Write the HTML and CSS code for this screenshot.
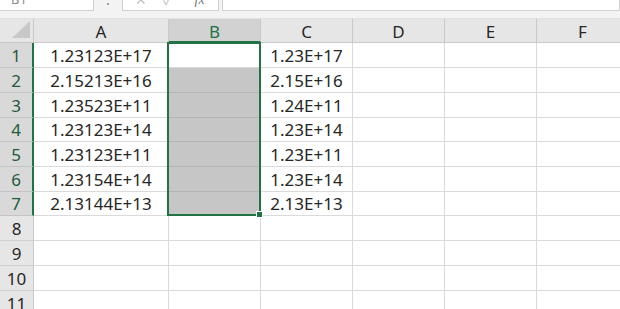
FILE: index.html
```html
<!DOCTYPE html>
<html>
<head>
<meta charset="utf-8">
<link rel="stylesheet" href="styles.css">
</head>
<body>
<div class="app">
  <div class="topbar">
    <div class="namebox"><span class="cut">B1</span></div>
    <div class="sep"><span class="dots">⋮</span></div>
    <div class="btnbox">
      <span class="cut icon">✕</span>
      <span class="cut icon">✓</span>
      <span class="cut icon fx">fx</span>
    </div>
    <div class="formula"></div>
  </div>
  <div class="sheet">
    <div class="grid">
      <div class="corner"><svg width="19" height="18" viewBox="0 0 19 18"><polygon points="18,0 18,17 0,17" fill="#c8c8c8"/></svg></div>
      <div class="ch">A</div>
      <div class="ch sel">B</div>
      <div class="ch">C</div>
      <div class="ch">D</div>
      <div class="ch">E</div>
      <div class="ch">F</div>

      <div class="rh on">1</div><div class="c">1.23123E+17</div><div class="c b"></div><div class="c">1.23E+17</div><div class="c"></div><div class="c"></div><div class="c"></div>
      <div class="rh on">2</div><div class="c">2.15213E+16</div><div class="c b g"></div><div class="c">2.15E+16</div><div class="c"></div><div class="c"></div><div class="c"></div>
      <div class="rh on">3</div><div class="c">1.23523E+11</div><div class="c b g"></div><div class="c">1.24E+11</div><div class="c"></div><div class="c"></div><div class="c"></div>
      <div class="rh on">4</div><div class="c">1.23123E+14</div><div class="c b g"></div><div class="c">1.23E+14</div><div class="c"></div><div class="c"></div><div class="c"></div>
      <div class="rh on">5</div><div class="c">1.23123E+11</div><div class="c b g"></div><div class="c">1.23E+11</div><div class="c"></div><div class="c"></div><div class="c"></div>
      <div class="rh on">6</div><div class="c">1.23154E+14</div><div class="c b g"></div><div class="c">1.23E+14</div><div class="c"></div><div class="c"></div><div class="c"></div>
      <div class="rh on">7</div><div class="c">2.13144E+13</div><div class="c b g"></div><div class="c">2.13E+13</div><div class="c"></div><div class="c"></div><div class="c"></div>
      <div class="rh">8</div><div class="c"></div><div class="c"></div><div class="c"></div><div class="c"></div><div class="c"></div><div class="c"></div>
      <div class="rh">9</div><div class="c"></div><div class="c"></div><div class="c"></div><div class="c"></div><div class="c"></div><div class="c"></div>
      <div class="rh">10</div><div class="c"></div><div class="c"></div><div class="c"></div><div class="c"></div><div class="c"></div><div class="c"></div>
      <div class="rh">11</div><div class="c"></div><div class="c"></div><div class="c"></div><div class="c"></div><div class="c"></div><div class="c"></div>
    </div>
    <div class="selection"><div class="handle"></div></div>
  </div>
</div>
</body>
</html>
```
FILE: styles.css
```css
html, body {
  margin: 0;
  padding: 0;
  background: #ffffff;
}
.app {
  width: 620px;
  height: 309px;
  overflow: hidden;
  font-family: "Noto Sans", "Noto Sans CJK JP", sans-serif;
  color: #262626;
}
.topbar {
  display: flex;
  height: 19px;
  background: #f3f3f3;
  box-sizing: border-box;
  border-bottom: 1px solid #e1e1e1;
}
.namebox, .btnbox, .formula {
  height: 11px;
  box-sizing: border-box;
  background: #fff;
  border: 1px solid #d0d0d0;
  border-top: none;
  overflow: hidden;
  display: flex;
  align-items: flex-start;
}
.namebox {
  width: 94px;
  border-left: none;
  padding-left: 11px;
}
.cut {
  font-size: 13px;
  line-height: 13px;
  color: #8a8a8a;
  margin-top: -7px;
}
.sep {
  width: 28px;
  display: flex;
  justify-content: center;
  align-items: flex-start;
  height: 11px;
  overflow: hidden;
}
.dots {
  font-size: 14px;
  line-height: 14px;
  color: #888;
  margin-top: -8px;
}
.btnbox {
  width: 97px;
  padding-left: 12px;
  gap: 16px;
}
.icon {
  color: #c2c2c2;
  font-size: 14px;
}
.fx {
  font-style: italic;
  font-family: "Liberation Serif", serif;
  color: #777;
  margin-left: 6px;
}
.formula {
  margin-left: 3px;
  flex: 1;
}
.sheet {
  position: relative;
}
.grid {
  display: grid;
  grid-template-columns: 34px 135px 92px 92px 92px 92px 92px;
  grid-template-rows: 24px 25px 25px 25px 24px 25px 25px 24px 25px 25px 25px 25px;
}
.grid > div {
  box-sizing: border-box;
  display: flex;
  align-items: center;
  justify-content: center;
  font-size: 17px;
  white-space: nowrap;
}
.corner {
  background: #e6e6e6;
  border-right: 1px solid #c9c9c9;
  border-bottom: 1px solid #c9c9c9;
  align-items: flex-end !important;
  justify-content: flex-end !important;
  padding: 0 2px 3px 0;
}
.ch {
  background: #e6e6e6;
  border-right: 1px solid #c9c9c9;
  border-bottom: 1px solid #c9c9c9;
  color: #262626;
  padding-top: 2px;
}
.ch.sel {
  background: #d2d2d2;
  color: #217346;
  border-bottom: 2px solid #217346;
}
.rh {
  background: #e6e6e6;
  border-right: 1px solid #c9c9c9;
  border-bottom: 1px solid #d0d0d0;
  color: #262626;
}
.rh.on {
  background: #d9d9d9;
  color: #1e5b3c;
  border-right: 2px solid #217346;
  border-bottom-color: #c4c4c4;
}
.c {
  border-right: 1px solid #dadada;
  border-bottom: 1px solid #dadada;
  background: #fff;
}
.c.g {
  background: #c6c6c6;
  border-bottom-color: #b4b4b4;
}
.selection {
  position: absolute;
  left: 167px;
  top: 23px;
  width: 94px;
  height: 174px;
  box-sizing: border-box;
  border: 2px solid #217346;
}
.handle {
  position: absolute;
  right: -4px;
  bottom: -4px;
  width: 5px;
  height: 5px;
  background: #217346;
  border: 1px solid #fff;
}
```
